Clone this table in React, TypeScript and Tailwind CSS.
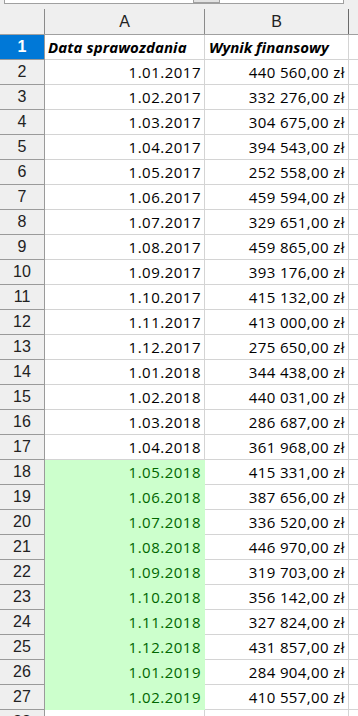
import React from "react";

const dates = [
  "1.01.2017","1.02.2017","1.03.2017","1.04.2017","1.05.2017","1.06.2017","1.07.2017","1.08.2017","1.09.2017","1.10.2017","1.11.2017","1.12.2017",
  "1.01.2018","1.02.2018","1.03.2018","1.04.2018","1.05.2018","1.06.2018","1.07.2018","1.08.2018","1.09.2018","1.10.2018","1.11.2018","1.12.2018",
  "1.01.2019","1.02.2019",
];
const values = [
  "440 560,00","332 276,00","304 675,00","394 543,00","252 558,00","459 594,00","329 651,00","459 865,00","393 176,00","415 132,00","413 000,00","275 650,00",
  "344 438,00","440 031,00","286 687,00","361 968,00","415 331,00","387 656,00","336 520,00","446 970,00","319 703,00","356 142,00","327 824,00","431 857,00",
  "284 904,00","410 557,00",
];

function RowHead({ n, sel }: { n: number; sel?: boolean }) {
  return (
    <div
      className={
        sel
          ? "w-[45px] shrink-0 flex items-center justify-center border-r border-b border-[#9a9a9a] bg-[#0078d7] text-white font-bold font-['Liberation_Sans',Arial,sans-serif] text-[16px]"
          : "w-[45px] shrink-0 flex items-center justify-center border-r border-b border-[#9a9a9a] bg-[#efefef] text-[#222] font-['Liberation_Sans',Arial,sans-serif] text-[16px]"
      }
    >
      {n}
    </div>
  );
}

export default function App() {
  return (
    <div className="w-[358px] h-[716px] overflow-hidden bg-white font-['Open_Sans',sans-serif] text-black">
      {/* top strip */}
      <div className="h-[4px] bg-[#efefef] flex">
        <div className="ml-[4px] w-[340px] h-[4px] bg-white border-l border-r border-b border-[#a0a0a0] flex">
          <div className="ml-[188px] w-[27px] h-[3px] bg-[#e2e2e2] border-l border-r border-b border-[#a0a0a0]" />
        </div>
      </div>
      {/* column header */}
      <div className="h-[31px] bg-[#efefef] border-b border-[#a0a0a0] flex items-end">
        <div className="w-[45px] h-[25px] shrink-0 border-r border-[#8a8a8a]" />
        <div className="w-[160px] h-[25px] shrink-0 border-r border-[#8a8a8a] flex items-center justify-center text-[#222] text-[16px] font-['Liberation_Sans',Arial,sans-serif]">
          A
        </div>
        <div className="w-[144px] h-[25px] shrink-0 border-r border-[#6a6a6a] flex items-center justify-center text-[#222] text-[16px] font-['Liberation_Sans',Arial,sans-serif]">
          B
        </div>
        <div className="flex-1" />
      </div>
      {/* row 1 */}
      <div className="flex h-[25px]">
        <RowHead n={1} sel />
        <div className="w-[160px] shrink-0 border-r border-b border-[#d4d4d4] flex items-center pl-[3px] font-bold italic text-[15px] tracking-[0.1px] whitespace-nowrap overflow-hidden">
          Data sprawozdania
        </div>
        <div className="w-[144px] shrink-0 border-r border-b border-[#d4d4d4] flex items-center pl-[4px] font-bold italic text-[15px] whitespace-nowrap overflow-hidden">
          Wynik finansowy
        </div>
        <div className="flex-1 border-b border-[#d4d4d4]" />
      </div>
      {dates.map((d, i) => {
        const n = i + 2;
        const green = n >= 18;
        return (
          <div key={n} className="flex h-[25px]">
            <RowHead n={n} />
            <div
              className={
                green
                  ? "w-[160px] shrink-0 border-r border-b border-[#ccffcc] bg-[#ccffcc] text-[#006600] flex items-center justify-end pr-[3px] text-[15px] tracking-[0.5px] whitespace-nowrap"
                  : "w-[160px] shrink-0 border-r border-b border-[#d4d4d4] flex items-center justify-end pr-[3px] text-[15px] tracking-[0.5px] whitespace-nowrap"
              }
            >
              {d}
            </div>
            <div className="w-[144px] shrink-0 border-r border-b border-[#d4d4d4] flex items-center justify-end pr-[3px] text-[15px] tracking-[0.4px] whitespace-nowrap">
              {values[i]} zł
            </div>
            <div className="flex-1 border-b border-[#d4d4d4]" />
          </div>
        );
      })}
      {/* row 28 partially visible */}
      <div className="flex h-[25px]">
        <RowHead n={28} />
        <div className="w-[160px] shrink-0 border-r border-b border-[#d4d4d4]" />
        <div className="w-[144px] shrink-0 border-r border-b border-[#d4d4d4]" />
        <div className="flex-1 border-b border-[#d4d4d4]" />
      </div>
    </div>
  );
}
